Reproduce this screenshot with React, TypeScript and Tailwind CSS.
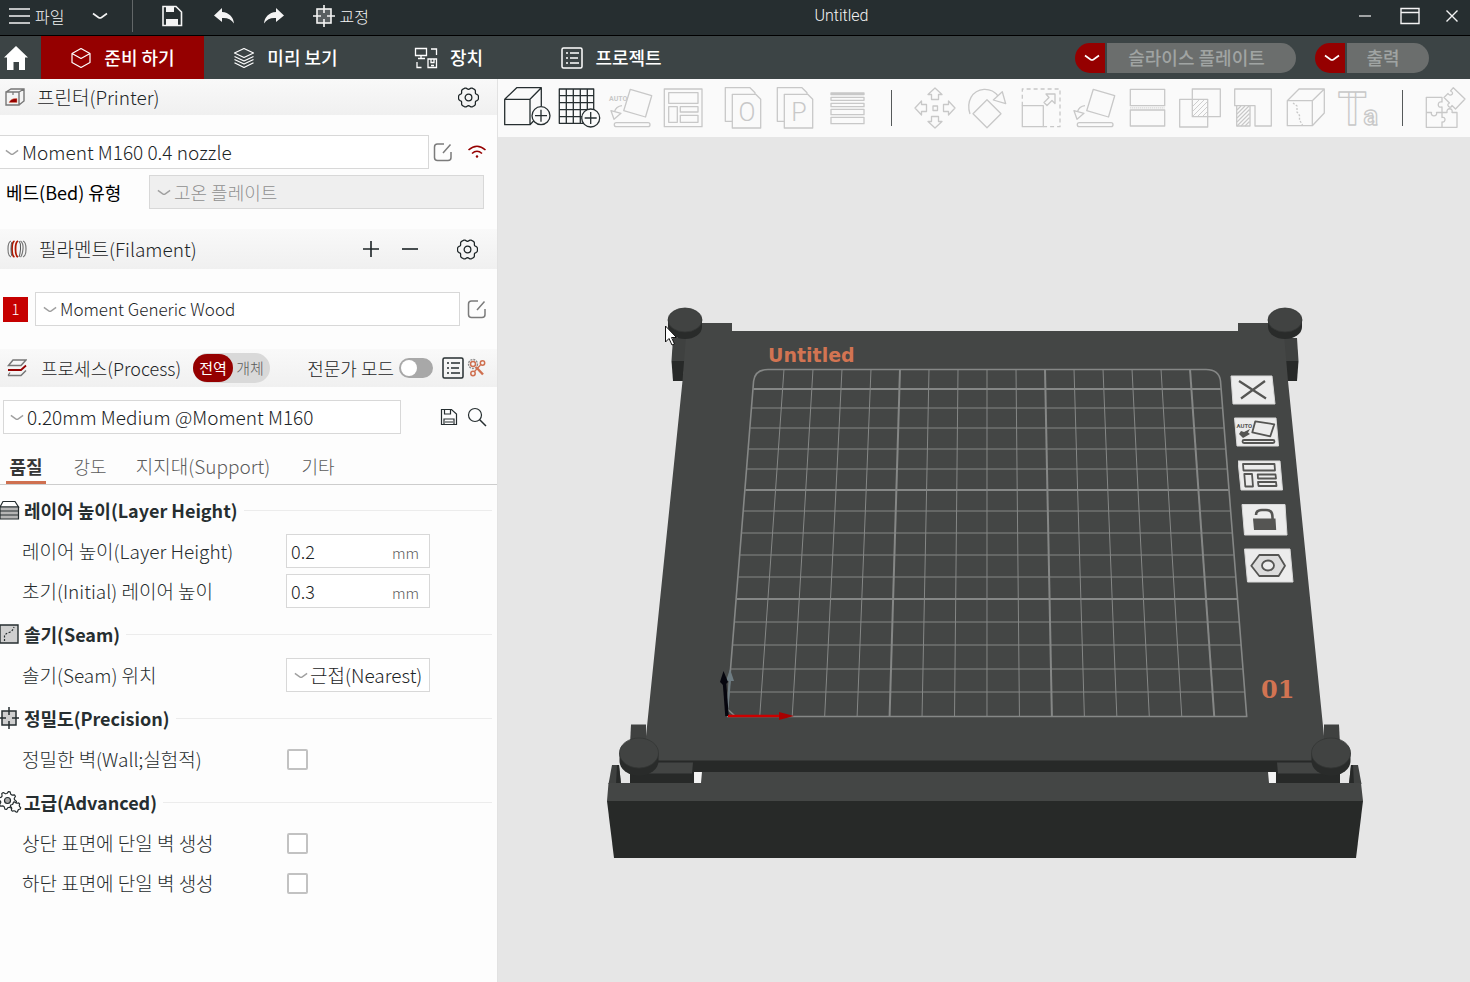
import React from "react";

type IconProps = { children: React.ReactNode; className?: string; box?: string };

function Icon({ children, className = "size-5", box = "0 0 20 20" }: IconProps) {
  return (
    <svg viewBox={box} className={"shrink-0 " + className} fill="none" stroke="currentColor" strokeWidth="1.2" aria-hidden="true">
      {children}
    </svg>
  );
}

const gearPoints = Array.from({ length: 72 }, (_, i) => {
  const a = (i * Math.PI) / 36;
  const r = 8.9 + 0.9 * Math.cos(6 * a) - 0.3 * Math.cos(12 * a);
  return `${(10 + r * Math.cos(a)).toFixed(2)},${(10 + r * Math.sin(a)).toFixed(2)}`;
}).join(" ");

function cogPoints(cx: number, cy: number, r: number, teeth: number) {
  return Array.from({ length: teeth * 4 }, (_, i) => {
    const a = ((i + 0.5) * Math.PI) / (teeth * 2);
    const d = i % 4 < 2 ? r : r * 0.78;
    return `${(cx + d * Math.cos(a)).toFixed(2)},${(cy + d * Math.sin(a)).toFixed(2)}`;
  }).join(" ");
}

const Gear = () => (
  <Icon className="size-[21px]">
    <polygon points={gearPoints} strokeLinejoin="round" />
    <circle cx="10" cy="10" r="3.2" />
  </Icon>
);
const Chevron = ({ className = "h-2 w-4" }: { className?: string }) => (
  <Icon box="0 0 16 8" className={className}>
    <path d="M1 1.5 L6.5 5.5 Q8 6.4 9.5 5.5 L15 1.5" strokeWidth="1.6" />
  </Icon>
);
const Edit = () => (
  <Icon className="size-5">
    <path d="M11 2H4.500Q1.500 2 1.500 5V15.500Q1.500 18.500 4.500 18.500H15Q18 18.500 18 15.500V10M10 11L17.500 2.500" strokeWidth="1.5" />
  </Icon>
);
const ListBox = ({ className = "size-[22px]" }: { className?: string }) => (
  <Icon box="0 0 22 22" className={className}>
    <rect x="1" y="1" width="20" height="20" rx="1.500" strokeWidth="1.5" />
    <path d="M5 6h2M5 11h2M5 16h2M9 6h9M9 11h8M9 16h9" strokeWidth="1.500" />
  </Icon>
);
const Crosshair = () => (
  <Icon box="0 0 22 22" className="size-[22px]">
    <rect x="4" y="4" width="14" height="14" fill="currentColor" fillOpacity="0.25" strokeWidth="1.6" />
    <path d="M11 0v8M11 14v8M0 11h8M14 11h8" strokeWidth="1.6" />
  </Icon>
);
const CubeOutline = () => (
  <Icon box="0 0 22 22" className="size-[22px]">
    <path d="M11 1.500L20 6.500V15.500L11 20.500L2 15.500V6.500ZM2 6.500L11 11.500L20 6.500" strokeLinejoin="round" />
  </Icon>
);
const Layers = () => (
  <Icon box="0 0 22 22" className="size-[22px]">
    <path d="M11 1.500L20.500 6L11 10.500L1.500 6ZM1.500 9.500L11 14L20.500 9.500M1.500 12.500L11 17L20.500 12.500M1.500 15.700L11 20.500L20.500 15.700" strokeLinejoin="round" />
  </Icon>
);
const Devices = () => (
  <Icon box="0 0 24 22" className="h-[22px] w-6">
    <path d="M1.500 1.500h11v7h-11zM7 8.500v3M4 11.500h7M17 2h5.500v6M3 15v5.500h4.500M14 12h8.500v8.500h-8.500zM17 12v3.500h3v-3.500M17 18.500h3" strokeWidth="1.300" />
  </Icon>
);

const tabs = [
  { name: "준비 하기", icon: <CubeOutline />, active: true },
  { name: "미리 보기", icon: <Layers /> },
  { name: "장치", icon: <Devices /> },
  { name: "프로젝트", icon: <ListBox /> },
];

function TitleBar() {
  return (
    <header className="flex h-9 items-center border-b border-black bg-[#262e30] pb-1 text-[16px] font-light text-[#f4f4f4]">
      <button className="flex items-center gap-[5px] pl-[9px]">
        <Icon box="0 0 21 18" className="h-[18px] w-[21px]">
          <path d="M0 2h21M0 9h21M0 16h21" strokeWidth="1.700" />
        </Icon>
        파일
      </button>
      <button aria-label="파일 메뉴" className="ml-7">
        <Chevron />
      </button>
      <span className="ml-6 h-8 w-px bg-[#626768]" />
      <button aria-label="저장" className="ml-7">
        <Icon box="0 0 22 22" className="size-[22px]">
          <path d="M2 1.500h13L20.500 7V20.500H2Z" strokeWidth="1.6" />
          <path d="M5 2h8v5H5zM5 14h12v6H5z" fill="currentColor" stroke="none" />
        </Icon>
      </button>
      <button aria-label="실행 취소" className="ml-[30px]">
        <Icon box="0 0 22 20" className="h-5 w-[22px]">
          <path d="M9 2L1 9.500L9 16V12C14 11.500 18 13 21 17.500C20.500 11 16 6.500 9 6Z" fill="currentColor" stroke="none" />
        </Icon>
      </button>
      <button aria-label="다시 실행" className="ml-7">
        <Icon box="0 0 22 20" className="h-5 w-[22px]">
          <path d="M13 2L21 9.500L13 16V12C8 11.500 4 13 1 17.500C1.500 11 6 6.500 13 6Z" fill="currentColor" stroke="none" />
        </Icon>
      </button>
      <button className="ml-7 flex items-center gap-1">
        <Crosshair />
        교정
      </button>
      <h1 className="flex-1 text-center font-['Roboto','Noto_Sans_CJK_KR',sans-serif] text-[16px]">Untitled</h1>
      <div className="flex w-[156px] items-center justify-end gap-6 pr-[11px]">
        <button aria-label="최소화">
          <Icon box="0 0 14 14" className="size-[14px]"><path d="M1 7h12" /></Icon>
        </button>
        <button aria-label="최대화" className="ml-1">
          <Icon box="0 0 20 18" className="h-[18px] w-5">
            <path d="M1 1.500h18v15H1zM1 5.500h18" strokeWidth="1.400" />
          </Icon>
        </button>
        <button aria-label="닫기" className="pl-px">
          <Icon box="0 0 14 14" className="size-[14px]"><path d="M1.500 1.500l11 11M12.500 1.500l-11 11" strokeWidth="1.400" /></Icon>
        </button>
      </div>
    </header>
  );
}

function SplitButton({ label, className }: { label: string; className: string }) {
  return (
    <div className="flex h-[30px] gap-[2px]">
      <button aria-label={label + " 옵션"} className="flex w-[30px] items-center justify-center rounded-l-full bg-[#950000] pl-1">
        <Chevron />
      </button>
      <button disabled className={"rounded-r-full bg-[#6b6e6d] pr-[10px] text-center font-medium text-[#a0a4a3] " + className}>
        {label}
      </button>
    </div>
  );
}

function TabBar() {
  return (
    <nav className="flex h-[43px] items-center bg-[#3c4445] text-[18px] text-white">
      <button aria-label="홈" className="flex w-[41px] items-center pl-[3px]">
        <Icon box="0 0 26 26" className="size-[26px]">
          <path d="M13 1L25 12.500H22V25H16V17H10.500V25H4V12.500H1Z" fill="currentColor" stroke="none" />
        </Icon>
      </button>
      {tabs.map((t) => (
        <button
          key={t.name}
          className={"flex h-full w-[163px] items-center justify-center gap-3 font-medium " + (t.active ? "bg-[#950000]" : "")}
        >
          {t.icon}
          {t.name}
        </button>
      ))}
      <div className="ml-auto flex gap-[19px] pr-[41px]">
        <SplitButton label="슬라이스 플레이트" className="w-[189px]" />
        <SplitButton label="출력" className="w-[82px]" />
      </div>
    </nav>
  );
}

function Combo({ label, value, className, disabled }: { label: string; value: string; className: string; disabled?: boolean }) {
  return (
    <div
      className={
        "flex h-[34px] items-center border border-[#d8d8d8] " +
        (disabled ? "bg-[#efefef] text-[#8f8f8f] " : "bg-white text-[#1c2426] ") +
        className
      }
    >
      <span className="flex text-[#a0a0a0]"><Chevron className="h-[7px] w-[14px]" /></span>
      <select aria-label={label} disabled={disabled} className="h-full min-w-0 flex-1 appearance-none bg-transparent pl-[3px] opacity-100 outline-none">
        <option>{value}</option>
      </select>
    </div>
  );
}

function PanelHeader({ children, className }: { children: React.ReactNode; className: string }) {
  return <div className={"flex items-center bg-linear-to-b from-[#f9f9f9] to-[#f0f0f0] text-[#1c2426] " + className}>{children}</div>;
}

function SectionTitle({ icon, children }: { icon: React.ReactNode; children: React.ReactNode }) {
  return (
    <div className="flex h-11 items-center pt-[2px] pr-[5px] text-[#262e30]">
      <span className="flex w-6 shrink-0">{icon}</span>
      <h2 className="text-[18px] font-bold">{children}</h2>
      <span className="ml-[6px] h-px flex-1 bg-[#ececec]" />
    </div>
  );
}

function Row({ id, label, children }: { id: string; label: string; children: React.ReactNode }) {
  return (
    <div className="flex h-10 items-center pl-[22px]">
      <label htmlFor={id} className="w-[264px] text-[#262c2e]">{label}</label>
      {children}
    </div>
  );
}

function LengthField({ id, value }: { id: string; value: string }) {
  return (
    <div className="flex h-[34px] w-36 items-center border border-[#d8d8d8] bg-white px-1">
      <input id={id} defaultValue={value} className="min-w-0 flex-1 bg-transparent text-[18px] text-[#1c2426] outline-none" />
      <span className="pt-1 pr-[6px] text-[15px] text-[#5b5b5b]">mm</span>
    </div>
  );
}

function Check({ id }: { id: string }) {
  return <input id={id} type="checkbox" className="ml-px size-[21px] appearance-none rounded-xs border-2 border-[#c2c2c2] bg-white checked:bg-[#950000]" />;
}

function Sidebar() {
  return (
    <aside className="w-[498px] shrink-0 border-r border-[#e2e2e2] bg-[#fdfdfd] text-[19px] leading-6 font-light">
      <PanelHeader className="h-9 pr-[18px] pl-[5px]">
        <Icon className="size-5">
          <path d="M1 5h13v13H1zM1 5L6 2H19V14L14 18M14 5L19 2" stroke="#777" strokeWidth="1.400" />
          <path d="M4 15.500Q6 11 12 11.500V15.500Z" fill="#950000" stroke="#e08060" strokeWidth="0.500" />
          <path d="M8 5v3" stroke="#777" />
        </Icon>
        <h2 className="ml-3 flex-1">프린터(Printer)</h2>
        <button aria-label="프린터 설정"><Gear /></button>
      </PanelHeader>
      <div className="flex items-center pt-5">
        <Combo label="프린터" value="Moment M160 0.4 nozzle" className="w-[429px] border-l-0 pl-[5px]" />
        <button aria-label="프린터 편집" className="ml-1 text-[#7b7b7b]"><Edit /></button>
        <button aria-label="네트워크" className="ml-[14px] text-[#950000]">
          <Icon className="size-5">
            <path d="M1.500 8Q10 0.500 18.500 8M5 11.500Q10 7 15 11.500" strokeWidth="1.600" />
            <circle cx="10" cy="14.500" r="1.200" fill="currentColor" stroke="none" />
          </Icon>
        </button>
      </div>
      <div className="flex items-center pt-[6px] pl-[6px]">
        <span className="w-[143px] text-[18px] font-normal text-black">베드(Bed) 유형</span>
        <Combo label="베드 유형" value="고온 플레이트" disabled className="w-[335px] pl-[7px] text-[18px]" />
      </div>

      <PanelHeader className="mt-5 h-10 pr-[19px] pl-[7px]">
        <Icon className="size-5">
          <path d="M4 2Q1 3 1 10T4 18M16 2Q19 3 19 10T16 18M13.500 2Q16.500 4 16 10T13.500 18" stroke="#777" />
          <path d="M7.500 2Q5 3 5 10T7.500 18M11 2Q8.500 3 8.500 10T11 18" stroke="#b01800" strokeWidth="1.800" />
          <path d="M5 3Q4 5 4 10T5 17M12 2Q14 4 13.500 10T12 18" stroke="#555" strokeWidth="1" />
        </Icon>
        <h2 className="ml-3 flex-1">필라멘트(Filament)</h2>
        <button aria-label="추가" className="mr-[23px]">
          <Icon box="0 0 16 16" className="size-4"><path d="M0 8h16M8 0v16" strokeWidth="1.600" /></Icon>
        </button>
        <button aria-label="제거" className="mr-[39px]">
          <Icon box="0 0 16 16" className="size-4"><path d="M0 8h16" strokeWidth="1.600" /></Icon>
        </button>
        <button aria-label="필라멘트 설정"><Gear /></button>
      </PanelHeader>
      <div className="mt-[23px] flex items-center pl-[3px]">
        <span className="mr-[7px] flex size-[25px] items-center justify-center bg-[#c60000] text-[15px] text-white">1</span>
        <Combo label="필라멘트" value="Moment Generic Wood" className="w-[425px] pl-[7px] text-[17px]" />
        <button aria-label="필라멘트 편집" className="ml-[7px] text-[#7b7b7b]"><Edit /></button>
      </div>

      <PanelHeader className="mt-[23px] h-[38px] pr-[10px] pl-[7px] text-[18px]">
        <Icon className="size-5">
          <path d="M1.500 7.500L6 2H19L14 7.500ZM1 17.500H14L19 12.500" stroke="#777" strokeWidth="1.500" />
          <path d="M1 12H14L19 7.500" stroke="#950000" strokeWidth="1.800" />
          <path d="M1 17.500l2-3" stroke="#777" />
        </Icon>
        <h2 className="ml-[14px]">프로세스(Process)</h2>
        <div className="ml-3 flex h-[30px] items-center rounded-full bg-[#d9d9d9] pr-[6px] text-[15px]">
          <button className="h-7 w-10 rounded-full bg-[#950000] font-normal text-white">전역</button>
          <button className="ml-[3px] text-[#5b5b5b]">개체</button>
        </div>
        <label htmlFor="expert" className="ml-auto">전문가 모드</label>
        <input
          id="expert"
          type="checkbox"
          role="switch"
          className="ml-[5px] h-5 w-[34px] appearance-none rounded-full border-2 border-[#a8a8a8] bg-[#a8a8a8] before:block before:size-4 before:rounded-full before:bg-white checked:before:ml-auto"
        />
        <button aria-label="목록" className="ml-[9px] text-[#262e30]"><ListBox /></button>
        <button aria-label="비교" className="ml-[3px] text-[#cf7050]">
          <Icon className="size-5">
            <circle cx="6" cy="6" r="4.500" strokeDasharray="2 1" stroke="#8b8b8b" strokeWidth="1.300" />
            <circle cx="6" cy="6" r="2.500" strokeWidth="1.500" />
            <circle cx="15.500" cy="5" r="2.200" strokeWidth="1.500" />
            <circle cx="6" cy="15.500" r="2.200" strokeWidth="1.500" />
            <path d="M9 9L16 16.500" strokeWidth="2.400" />
            <path d="M7.500 13.500L13.500 7" strokeWidth="1.300" />
          </Icon>
        </button>
      </PanelHeader>
      <div className="mt-[13px] flex items-center pl-[3px]">
        <Combo label="프로세스" value="0.20mm Medium @Moment M160" className="w-[398px] pl-[6px]" />
        <button aria-label="프로세스 저장" className="ml-[39px] text-[#262e30]">
          <Icon box="0 0 18 18" className="size-[18px]">
            <path d="M1.500 1.500h10L16.500 6V16.500h-15zM4.500 1.500v4.500h6v-4.500M4 16.500v-5.500h10v5.500M5 14h8" />
          </Icon>
        </button>
        <button aria-label="검색" className="ml-[9px] text-[#262e30]">
          <Icon className="size-5">
            <circle cx="8" cy="8" r="6.500" />
            <path d="M12.500 12.500L19 19" strokeWidth="1.500" />
          </Icon>
        </button>
      </div>

      <div className="mt-4 flex h-[35px] gap-[22px] border-b border-[#cdcdcd] pl-[6px] text-[#5b5b5b]">
        <button className="w-10 border-b-3 border-[#cf7050] text-[18px] font-bold text-[#363636]">품질</button>
        <button className="w-11 pb-[3px] text-[18px]">강도</button>
        <button className="w-[138px] pb-[3px]">지지대(Support)</button>
        <button className="w-12 pb-[3px] text-[18px]">기타</button>
      </div>

      <div className="pt-[2px]">
        <SectionTitle
          icon={
            <Icon box="0 0 20 20" className="size-5">
              <path d="M0 7L3 1.500H15L18.500 7Z" fill="#fff" />
              <path d="M0 7h18.500v4H0zM0 11h18.500v4H0zM0 15h18.500v4H0z" fill="#b5b5b5" />
            </Icon>
          }
        >
          레이어 높이(Layer Height)
        </SectionTitle>
        <Row id="layer" label="레이어 높이(Layer Height)"><LengthField id="layer" value="0.2" /></Row>
        <Row id="initial" label="초기(Initial) 레이어 높이"><LengthField id="initial" value="0.3" /></Row>
        <SectionTitle
          icon={
            <Icon box="0 0 19 20" className="h-5 w-[19px]">
              <path d="M0 1h18v18H0z" fill="#cfcfcf" strokeWidth="1.400" />
              <path d="M4.500 17V12Q5 10 9 8.500T14 3" strokeDasharray="2 1.500" />
            </Icon>
          }
        >
          솔기(Seam)
        </SectionTitle>
        <Row id="seam" label="솔기(Seam) 위치">
          <div className="flex h-[34px] w-36 items-center border border-[#d8d8d8] bg-white pl-[7px] text-[#1c2426]">
            <span className="flex text-[#a0a0a0]"><Chevron className="h-[7px] w-[14px]" /></span>
            <select id="seam" className="h-full min-w-0 flex-1 appearance-none bg-transparent pl-[2px] outline-none">
              <option>근접(Nearest)</option>
            </select>
          </div>
        </Row>
        <SectionTitle
          icon={
            <Icon box="3 0 19 22" className="h-[22px] w-[19px]">
              <rect x="5" y="4" width="14" height="14" fill="#cfcfcf" strokeWidth="1.500" />
              <path d="M12 0v8M12 14v8M3 11h6M15 11h7" strokeWidth="1.500" />
            </Icon>
          }
        >
          정밀도(Precision)
        </SectionTitle>
        <Row id="wall" label="정밀한 벽(Wall;실험적)"><Check id="wall" /></Row>
        <SectionTitle
          icon={
            <Icon box="0 0 22 22" className="size-[22px]">
              <polygon points={cogPoints(7.5, 9.5, 9, 8)} strokeLinejoin="round" />
              <circle cx="7.500" cy="9.500" r="3" fill="#aaa" />
              <polygon points={cogPoints(15.5, 16, 5.2, 6)} fill="#fdfdfd" strokeLinejoin="round" />
            </Icon>
          }
        >
          고급(Advanced)
        </SectionTitle>
        <Row id="top" label="상단 표면에 단일 벽 생성"><Check id="top" /></Row>
        <Row id="bottom" label="하단 표면에 단일 벽 생성"><Check id="bottom" /></Row>
      </div>
    </aside>
  );
}

function Tool({ label, children, on, wide }: { label: string; children: React.ReactNode; on?: boolean; wide?: boolean }) {
  return (
    <button
      aria-label={label}
      className={"flex shrink-0 justify-center " + (wide ? "w-[53px] " : "w-[52px] ") + (on ? "text-[#262e30]" : "text-[#c8c8c8]")}
    >
      <svg viewBox="0 0 52 52" className="size-[52px] shrink-0 overflow-visible" fill="none" stroke="currentColor" strokeWidth="1.300" strokeLinejoin="round">
        {children}
      </svg>
    </button>
  );
}

const moveArrow = "M26 6L33 12.500H29.500V17.500H22.500V12.500H19Z";
const docBack = "M15.300 39.300H8.300V5.700H33L38 10.700V12.300";
const docFront = "M15.300 12.300H38.700L43.700 17.300V46H15.300Z";
const tiltedPlate = "M25.300 7.300L46.700 13.700L40.500 35L18.700 28.700Z";
const layArrow = "M17 23.700Q11 24.500 9.500 29.700M6 28.700L16 31.300L9 37.300Z";

function Toolbar() {
  return (
    <div className="flex h-[58px] items-center overflow-hidden bg-[#fafafa] pl-[3px]">
      <Tool label="모델 추가" on>
        <path d="M3.700 17.300H29V42.700H3.700ZM3.700 17.300L15.700 5.700H40.300L29 17.300M40.300 5.700V24M29 42.700L33 38.500" />
        <circle cx="40" cy="33.700" r="9" fill="#fafafa" />
        <path d="M34 33.700H46M40 27.700V39.700" />
      </Tool>
      <Tool label="플레이트 추가" on>
        <path d="M6.300 7H40.700V41.300H6.300ZM13.300 7V41.300M20.300 7V41.300M27.300 7V41.300M34.300 7V41.300M6.300 13.700H40.700M6.300 20.700H40.700M6.300 27.700H40.700M6.300 34.700H40.700" />
        <circle cx="37.700" cy="36" r="9" fill="#fafafa" />
        <path d="M31.700 36H43.700M37.700 30V42" />
      </Tool>
      <Tool label="자동 방향">
        <path d={tiltedPlate} />
        <text x="4" y="18.500" className="font-['Liberation_Sans_Narrow','Roboto',sans-serif] text-[7px] font-bold" fill="currentColor" stroke="none">AUTO</text>
        <path d={layArrow} />
        <rect x="9.300" y="40.700" width="35.700" height="4" rx="2" />
      </Tool>
      <Tool label="배치">
        <path d="M7.300 7H45V44.700H7.300ZM11.700 10.700H41V21.300H11.700ZM11.700 24.700H20.300V40.300H11.700ZM23.300 24.700H41V30H23.300ZM23.300 33.300H41V40.300H23.300Z" />
      </Tool>
      <span className="w-2 shrink-0" />
      <Tool label="개체로 분할">
        <path d={docBack} /><path d={docFront} />
        <text x="30" y="38.500" textAnchor="middle" className="font-['Liberation_Sans_Narrow','Roboto',sans-serif] text-[25px] font-light" fill="currentColor" stroke="none">O</text>
      </Tool>
      <Tool label="부품으로 분할">
        <path d={docBack} /><path d={docFront} />
        <text x="30" y="38.500" textAnchor="middle" className="font-['Liberation_Sans_Narrow','Roboto',sans-serif] text-[25px] font-light" fill="currentColor" stroke="none">P</text>
      </Tool>
      <Tool label="가변 레이어 높이">
        <path d="M10 11H43V12.500H10Z" fill="currentColor" />
        <path d="M10 15.300H43V18.300H10ZM10 21.300H43V24.700H10ZM10 27.300H43V32.700H10ZM10 35.300H43V41.700H10Z" />
      </Tool>
      <span className="mr-4 ml-[18px] h-9 w-px shrink-0 bg-[#55595a]" />
      <Tool label="이동" wide>
        <path d={moveArrow} />
        <path d={moveArrow} transform="rotate(90 26 26)" />
        <path d={moveArrow} transform="rotate(180 26 26)" />
        <path d={moveArrow} transform="rotate(270 26 26)" />
        <rect x="24" y="24" width="4.500" height="4.500" />
      </Tool>
      <Tool label="회전" wide>
        <path d="M25 17.700L39 31.700L25 45.700L11 31.700ZM8 32C4 20 10 8 22 7.300C29 7 33.500 10.500 36 14M31.300 18L40.300 9.700L43.700 21.700Z" />
      </Tool>
      <Tool label="배율" wide>
        <path d="M7.300 23.700V7H45V44.700H28.300" strokeDasharray="4 3" />
        <path d="M7.300 23.700H28.300V44.700H7.300ZM31 12H40V21.500L37 18.500L32 23.500L29 20.500L34 15.500Z" />
      </Tool>
      <Tool label="바닥에 놓기" wide>
        <path d={tiltedPlate} /><path d={layArrow} />
        <rect x="9.300" y="40.700" width="35.700" height="4" rx="2" />
      </Tool>
      <Tool label="자르기" wide>
        <path d="M9.300 7.300H43.700V23.700H9.300ZM9.300 28H43.700V44H9.300Z" />
        <path d="M9.300 25.800H43.700" strokeDasharray="1 1" />
      </Tool>
      <Tool label="메시 불리언" wide>
        <path d="M18.300 7H46.300V34.700H18.300ZM5.700 17.300H33.700V45H5.700Z" />
        <path d="M19 24L25.500 17.500M19 29L30.500 17.500M19 34L33.500 19.500M24 34L33.500 24.500M29 34L33.500 29.500" strokeWidth="0.900" />
      </Tool>
      <Tool label="지지대 칠하기" wide>
        <path d="M7.700 7H44.300V44H28V23.700H7.700ZM9.700 23.700V44H23V23.700" />
        <path d="M10 28L14 24M10 32L18 24M10 36L22 24M10 40L22.500 27.500M10 44L22.500 31.500M14 44L22.500 35.500M18 44L22.500 39.500" strokeWidth="1.200" />
      </Tool>
      <Tool label="솔기 칠하기" wide>
        <path d="M7.300 18.700H32.300V43.700H7.300ZM7.300 18.700L19 7H44.300L32.300 18.700M44.300 7V31L32.300 43.700" />
        <path d="M13 21L17 24V30L19.500 33.500V38L22.500 43" strokeDasharray="2 1.500" />
      </Tool>
      <Tool label="텍스트" wide>
        <text x="5" y="43" className="font-['Roboto',sans-serif] text-[46px] font-bold">
          T<tspan dx="-3" className="text-[27px]">a</tspan>
        </text>
      </Tool>
      <span className="mr-4 ml-[17px] h-9 w-px shrink-0 bg-[#55595a]" />
      <Tool label="조립">
        <path d="M7.300 15.300H23V20C18.500 18.500 17.500 26.500 23 25V30.500H17.500C19 35 11 35 12.500 30.500H7.300ZM7.300 30.500V45.300H23V40C27 41 27 34 23 35.500V30.500H28C27 25.500 34.500 25.500 33 30.500H38V45.300H23" />
        <path d="M34.300 5.700L46 17L36.500 27L33 23.500C32 28 26 22.500 30.500 21L25 15.500L29 11.500C31 15.500 36.500 11 31.500 9Z" />
      </Tool>
    </div>
  );
}

const gridY = [369, 389, 408, 428, 449, 469, 490, 511, 533, 555, 577, 599, 622, 645, 669, 692, 716];
const leftAt = (y: number) => 755 - (y - 369) * 0.0798;
const rightAt = (y: number) => 1219 + (y - 369) * 0.0798;

function Knob({ x, y, rx, ry, h }: { x: number; y: number; rx: number; ry: number; h: number }) {
  return (
    <g>
      <path d={`M${x - rx} ${y}V${y + h}A${rx} ${ry} 0 0 0 ${x + rx} ${y + h}V${y}Z`} fill="#292b2a" />
      <ellipse cx={x} cy={y} rx={rx} ry={ry} fill="#414342" stroke="#343635" strokeWidth="0.800" />
    </g>
  );
}

function HalfPrinter() {
  return (
    <g>
      <path d="M673 338H688L685 361H671.500Z" fill="#3f4140" />
      <path d="M671.500 361H685L683 381H673Z" fill="#272928" />
      <path d="M631 724.500H646V745H630Z" fill="#3f4140" />
      <path d="M612 765H619L621 784H608.500Z" fill="#3f4140" />
      <path d="M617 765H619L621 784H616Z" fill="#272928" />
      <path d="M630 759H694V784H630Z" fill="#272928" />
      <path d="M655 762.500H693L692 773.500H645Z" fill="#434544" />
      <path d="M694 772H702L701 784H694.500Z" fill="#f3f3f3" />
    </g>
  );
}

function PlateButton({ label, className, box, face, children }: { label: string; className: string; box: string; face: string; children: React.ReactNode }) {
  return (
    <button aria-label={label} className={"absolute " + className}>
      <svg viewBox={box} className="size-full" fill="none" stroke="#555553" strokeWidth="1.800" strokeLinejoin="round">
        <polygon points={face} fill="#ececec" stroke="#d8d8d8" strokeWidth="1" />
        {children}
      </svg>
    </button>
  );
}

function Scene() {
  return (
    <main className="flex min-h-0 flex-1 items-center justify-center overflow-hidden bg-[#e6e6e6]">
      <div className="relative h-[844px] w-[972px] shrink-0">
        <svg viewBox="498 138 972 844" className="size-full" fill="none">
          <path d="M692 759H1278V773H692Z" fill="#272928" />
          <HalfPrinter />
          <g transform="matrix(-1 0 0 1 1970 0)"><HalfPrinter /></g>
          <path d="M687 323H732V331H1238V323H1283L1288 381L1326.500 760.500H643.500L682.500 381Z" fill="#444645" />
          <path d="M702 772H1268L1269 783H1361L1363 801H607L608.500 783H701Z" fill="#444645" />
          <path d="M607 801H1363L1356 858H614Z" fill="#272928" />
          <Knob x={685} y={320} rx={17} ry={12} h={7} />
          <Knob x={1285} y={320} rx={17} ry={12} h={7} />
          <Knob x={639} y={753} rx={19.500} ry={15} h={8} />
          <Knob x={1331} y={753} rx={19.500} ry={15} h={8} />

          <g stroke="#858786">
            {gridY.slice(1, 16).map((y, i) => (
              <line key={y} x1={leftAt(y)} x2={rightAt(y)} y1={y} y2={y} strokeWidth={i % 5 === 0 ? 2 : 1} />
            ))}
            {Array.from({ length: 15 }, (_, i) => i + 1).map((i) => (
              <line key={i} x1={755 + i * 29} y1={369} x2={727.3 + i * 32.46} y2={716} strokeWidth={i % 5 === 0 ? 2 : 1} />
            ))}
            <path d="M735 716L727.300 709L753.600 381Q755 369.500 768 369.500H1206Q1219 369.500 1220.500 381L1246.700 716.500H727" strokeWidth="1.600" />
          </g>

          <path d="M727 714L730 680" stroke="#6e7c82" strokeWidth="2" />
          <path d="M730 669L734 681H726Z" fill="#6e7c82" />
          <path d="M727 716L724.500 683" stroke="#06060e" strokeWidth="3.500" />
          <path d="M723.500 671L728 682L724 686L720 682Z" fill="#06060e" />
          <path d="M728 716H780" stroke="#cc0000" strokeWidth="2.500" />
          <path d="M779 712L794 716L779 720Z" fill="#a80000" />

          <text x="768" y="362" fill="#d27452" className="font-['DejaVu_Sans',sans-serif] text-[19px] font-bold">Untitled</text>
          <text x="1261" y="698" fill="#d27452" className="font-['DejaVu_Serif',serif] text-[24px] font-bold">01</text>

          <path d="M665.500 326V342L669 338.500L672 345L674.500 344L671.500 337.500H676.500Z" fill="#fff" stroke="#111" strokeWidth="1" />
        </svg>

        <PlateButton label="플레이트 삭제" className="top-[237px] left-[732px] h-[30px] w-[46px]" box="1230 375 46 30" face="1231,376 1272,376 1275,404 1233,404">
          <path d="M1239 381L1266 398.500M1265 381L1241 398.500" strokeWidth="2.200" />
        </PlateButton>
        <PlateButton label="플레이트 자동 방향" className="top-[279px] left-[736px] h-[30px] w-[46px]" box="1234 417 46 30" face="1234.500,418 1276,418 1278.500,446 1237,446">
          <text x="1236.500" y="428" className="font-['Roboto',sans-serif] text-[6px] font-bold" fill="#555553" stroke="none">AUTO</text>
          <path d="M1255.300 421.300L1274.300 424.300L1270.300 436.300L1252.300 432.300Z" fill="#ececec" />
          <path d="M1239 434L1241 431L1244 432L1250 429L1248 432.500L1250 434L1243 438Z" fill="#555553" stroke="none" />
          <rect x="1242.500" y="440" width="32" height="3" rx="1.500" />
        </PlateButton>
        <PlateButton label="플레이트 배치" className="top-[322px] left-[740px] h-[31px] w-[46px]" box="1238 460 46 31" face="1238,461 1280,461 1282.500,490 1241,490">
          <path d="M1243 464H1274.500L1275 470.500H1243.500ZM1244.300 474H1252L1253 486.500H1245.300ZM1257.700 474.500H1275.500L1276 478.500H1258ZM1258 482H1276L1276.500 486H1258.500Z" />
        </PlateButton>
        <PlateButton label="플레이트 잠금" className="top-[365px] left-[743px] h-[33px] w-12" box="1241 503 48 33" face="1242,504.500 1285,504.500 1287,535 1244.500,535">
          <path d="M1253 518.500H1275.500L1276.200 530H1254Z" fill="#555553" stroke="none" />
          <path d="M1256 515C1256 511 1258.500 510 1262 510H1266C1270 510 1272 512 1272.300 515L1272.700 520" strokeWidth="2.600" />
        </PlateButton>
        <PlateButton label="플레이트 설정" className="top-[410px] left-[746px] h-[35px] w-[50px]" box="1244 548 50 35" face="1244.500,549 1290,549 1293,582 1247.500,582">
          <path d="M1251.300 565.700L1259.300 555H1278.500L1285 565.700L1278.700 576H1259.300Z" fill="#dcdcdc" />
          <ellipse cx="1268" cy="565.500" rx="6" ry="5" fill="#ececec" />
        </PlateButton>
      </div>
    </main>
  );
}

export default function App() {
  return (
    <div className="flex min-h-screen flex-col overflow-hidden bg-[#e6e6e6] font-['Noto_Sans_CJK_KR',sans-serif]">
      <TitleBar />
      <TabBar />
      <div className="flex flex-1">
        <Sidebar />
        <div className="flex min-w-0 flex-1 flex-col">
          <Toolbar />
          <Scene />
        </div>
      </div>
    </div>
  );
}
